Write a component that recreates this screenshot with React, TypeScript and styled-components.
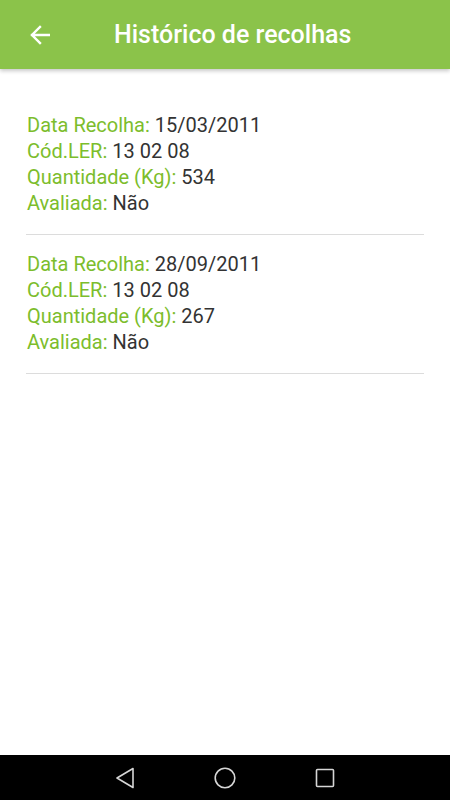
import React from "react";
import styled, { createGlobalStyle } from "styled-components";

interface Recolha {
  data: string;
  codLer: string;
  quantidade: number;
  avaliada: boolean;
}

const recolhas: Recolha[] = [
  { data: "15/03/2011", codLer: "13 02 08", quantidade: 534, avaliada: false },
  { data: "28/09/2011", codLer: "13 02 08", quantidade: 267, avaliada: false },
];

const App: React.FC = () => {
  return (
    <>
      <GlobalStyle />
      <Screen>
        <Toolbar>
          <BackButton aria-label="Voltar">
            <svg width="20" height="20" viewBox="0 0 20 20" fill="none">
              <path
                d="M19 10H2M10 2L2 10L10 18"
                stroke="#fff"
                strokeWidth="2.4"
                strokeLinecap="square"
              />
            </svg>
          </BackButton>
          <Title>Histórico de recolhas</Title>
        </Toolbar>

        <List>
          {recolhas.map((r, i) => (
            <Item key={i}>
              <Line>
                <Label>Data Recolha:</Label> {r.data}
              </Line>
              <Line>
                <Label>Cód.LER:</Label> {r.codLer}
              </Line>
              <Line>
                <Label>Quantidade (Kg):</Label> {r.quantidade}
              </Line>
              <Line>
                <Label>Avaliada:</Label> {r.avaliada ? "Sim" : "Não"}
              </Line>
            </Item>
          ))}
        </List>

        <NavBar>
          <NavButton aria-label="Voltar">
            <svg width="20" height="22" viewBox="0 0 20 22" fill="none">
              <path
                d="M18 1.5L2 11L18 20.5Z"
                stroke="#d6d6d6"
                strokeWidth="1.6"
                strokeLinejoin="round"
              />
            </svg>
          </NavButton>
          <NavButton aria-label="Início">
            <svg width="22" height="22" viewBox="0 0 22 22" fill="none">
              <circle cx="11" cy="11" r="9.8" stroke="#d6d6d6" strokeWidth="1.6" />
            </svg>
          </NavButton>
          <NavButton aria-label="Recentes">
            <svg width="20" height="20" viewBox="0 0 20 20" fill="none">
              <rect
                x="1.5"
                y="1.5"
                width="17"
                height="17"
                rx="1"
                stroke="#d6d6d6"
                strokeWidth="1.6"
              />
            </svg>
          </NavButton>
        </NavBar>
      </Screen>
    </>
  );
};

const GlobalStyle = createGlobalStyle`
  html, body {
    margin: 0;
    padding: 0;
    background: #fff;
  }
  body {
    font-family: Roboto, "Noto Sans", sans-serif;
  }
`;

const Screen = styled.div`
  width: 450px;
  height: 800px;
  display: flex;
  flex-direction: column;
  background: #fff;
  overflow: hidden;
`;

const Toolbar = styled.header`
  height: 69px;
  flex-shrink: 0;
  display: flex;
  align-items: center;
  background: #8bc34a;
  box-shadow: 0 2px 4px rgba(0, 0, 0, 0.22);
  position: relative;
  z-index: 1;
`;

const BackButton = styled.button`
  width: 80px;
  height: 69px;
  padding: 0 0 0 30px;
  border: none;
  background: none;
  display: flex;
  align-items: center;
  cursor: pointer;
`;

const Title = styled.h1`
  margin: 0 0 0 34px;
  color: #fff;
  font-size: 25px;
  font-weight: 500;
`;

const List = styled.main`
  flex: 1;
  padding: 27px 26px 0;
`;

const Item = styled.div`
  padding: 16px 1px 18px;
  border-bottom: 1.5px solid #dcdcdc;
`;

const Line = styled.div`
  font-size: 20px;
  line-height: 26px;
  color: #333;
`;

const Label = styled.span`
  color: #7cbd2c;
`;

const NavBar = styled.nav`
  height: 45px;
  flex-shrink: 0;
  background: #000;
  display: flex;
  justify-content: center;
  align-items: center;
  gap: 78px;
`;

const NavButton = styled.button`
  width: 22px;
  height: 22px;
  padding: 0;
  border: none;
  background: none;
  display: flex;
  align-items: center;
  justify-content: center;
`;

export default App;
